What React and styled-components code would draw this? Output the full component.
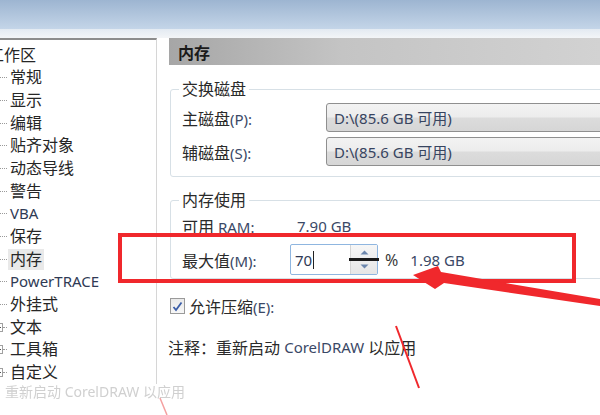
import styled, { createGlobalStyle } from "styled-components";

const Global = createGlobalStyle`
  html, body {
    margin: 0;
    padding: 0;
    background: #fff;
  }
  body {
    font-family: "Noto Sans", "Noto Sans CJK SC", sans-serif;
    color: #2a2a2a;
  }
`;

const Page = styled.div`
  position: relative;
  width: 600px;
  height: 415px;
  overflow: hidden;
  display: flex;
  flex-direction: column;
  background: #fff;
`;

const TopBand = styled.div`
  flex: none;
  height: 29px;
  background: linear-gradient(#9db5d1, #c4d5e8);
`;

const Strip = styled.div`
  flex: none;
  height: 9px;
  background: linear-gradient(#e3eaf2, #f3f5f7);
`;

const Main = styled.div`
  display: flex;
  flex: 1;
  min-height: 0;
`;

const Side = styled.div`
  flex: none;
  width: 157px;
  display: flex;
  flex-direction: column;
`;

const Tree = styled.ul`
  list-style: none;
  margin: 0;
  padding: 4px 0 0;
  border-top: 2px solid #8c8c8c;
  border-right: 1px solid #d6d6d6;
  overflow: hidden;
`;

const TreeRow = styled.li`
  display: flex;
  align-items: center;
  height: 22.65px;
  font-size: 16px;
  white-space: nowrap;
`;

const Dash = styled.span`
  flex: none;
  width: ${(p) => (p.short ? "4px" : "7px")};
  border-top: 1px dotted #9a9a9a;
  margin-right: 1px;
`;

const Expander = styled.span`
  flex: none;
  position: relative;
  width: 9px;
  height: 9px;
  margin-left: -6px;
  border: 1px solid #a0a0a0;
  box-sizing: border-box;
  &::before {
    content: "";
    position: absolute;
    left: 1px;
    right: 1px;
    top: 3px;
    border-top: 1px solid #555;
  }
  &::after {
    content: "";
    position: absolute;
    top: 1px;
    bottom: 1px;
    left: 3px;
    border-left: 1px solid #555;
  }
`;

const TreeText = styled.span`
  padding: 0 2px;
  line-height: 21px;
  margin-left: ${(p) => (p.root ? "-14px" : "0")};
  color: ${(p) => (p.latin ? "#2f3a55" : "#262626")};
  background: ${(p) => (p.selected ? "#e9e9e9" : "transparent")};
  font-size: ${(p) => (p.latin ? "15px" : "16px")};
`;

const Ghost = styled.div`
  padding-left: 5px;
  font-size: 14px;
  line-height: 16px;
  color: #d0d0d0;
  white-space: nowrap;
  filter: blur(0.6px);
`;

const Content = styled.div`
  flex: 1;
  min-width: 0;
  padding-left: 12px;
  display: flex;
  flex-direction: column;
`;

const Header = styled.div`
  height: 27px;
  display: flex;
  align-items: center;
  padding-left: 9px;
  font-size: 16px;
  font-weight: bold;
  color: #1a1a1a;
  background: linear-gradient(90deg, #a6a6a6, #c4c4c4 40%, #d2d2d2);
`;

const Group = styled.fieldset`
  margin: ${(p) => p.top}px -30px 0 1px;
  padding: ${(p) => p.pad};
  min-width: 0;
  border: 1px solid #d7e0e6;
  border-radius: 3px;
  display: flex;
  flex-direction: column;
  gap: ${(p) => p.gap}px;
`;

const Legend = styled.legend`
  padding: 0 3px;
  margin-left: 8px;
  font-size: 16px;
  line-height: 20px;
  color: #2a2a2a;
`;

const FieldRow = styled.div`
  display: flex;
  align-items: center;
  padding-left: 11px;
  height: ${(p) => p.h}px;
`;

const Label = styled.div`
  flex: none;
  width: ${(p) => p.w}px;
  font-size: 16px;
  white-space: nowrap;
  color: #2a2a2a;
`;

const Latin = styled.span`
  color: #3a4866;
  font-size: 15px;
`;

const Combo = styled.div`
  flex: 1;
  height: 29px;
  box-sizing: border-box;
  display: flex;
  align-items: center;
  padding-left: 7px;
  border: 1px solid #8f8f8f;
  border-radius: 3px;
  background: linear-gradient(#f3f3f3, #ececec 48%, #dcdcdc 52%, #d6d6d6);
  font-size: 15px;
  color: #37445f;
  white-space: nowrap;
`;

const Value = styled.div`
  padding-left: 7px;
  font-size: 15px;
  color: #3a4866;
`;

const Spin = styled.div`
  flex: none;
  width: 88px;
  height: 31px;
  box-sizing: border-box;
  display: flex;
  border: 1px solid #8fb6e0;
  border-radius: 2px;
  background: #fff;
`;

const SpinText = styled.div`
  flex: 1;
  display: flex;
  align-items: center;
  padding-left: 4px;
  font-size: 15px;
  color: #2f3a55;
  &::after {
    content: "";
    width: 1px;
    height: 18px;
    margin-left: 1px;
    background: #222;
  }
`;

const SpinButtons = styled.div`
  position: relative;
  flex: none;
  width: 26px;
  display: flex;
  flex-direction: column;
  border-left: 1px solid #d4d4d4;
  background: linear-gradient(#f6f6f6, #e6e6e6);
  &::after {
    content: "";
    position: absolute;
    left: -2px;
    right: -2px;
    top: calc(50% - 2px);
    height: 3px;
    background: #1a1a1a;
  }
`;

const SpinHalf = styled.div`
  flex: 1;
  display: flex;
  align-items: center;
  justify-content: center;
`;

const Unit = styled.div`
  padding-left: 7px;
  font-size: 16px;
  color: #3a3a3a;
`;

const Amount = styled.div`
  padding-left: 12px;
  font-size: 15px;
  color: #3a4866;
`;

const CheckRow = styled.div`
  display: flex;
  align-items: center;
  gap: 4px;
  margin: 16px 0 0 1px;
  height: 22px;
  font-size: 16px;
`;

const Box = styled.span`
  flex: none;
  width: 15px;
  height: 16px;
  box-sizing: border-box;
  border: 1px solid #9a9a9a;
  background: linear-gradient(#e9e9e9, #f7f7f7);
  display: flex;
  align-items: center;
  justify-content: center;
`;

const Note = styled.div`
  margin: 19px 0 0 -1px;
  height: 22px;
  display: flex;
  align-items: center;
  font-size: 16px;
  white-space: nowrap;
`;

const Marks = styled.svg`
  position: absolute;
  left: 0;
  top: 0;
  pointer-events: none;
`;

const tree = [
  { text: "工作区", root: true },
  { text: "常规" },
  { text: "显示" },
  { text: "编辑" },
  { text: "贴齐对象" },
  { text: "动态导线" },
  { text: "警告" },
  { text: "VBA", latin: true },
  { text: "保存" },
  { text: "内存", selected: true },
  { text: "PowerTRACE", latin: true },
  { text: "外挂式" },
  { text: "文本", expand: true },
  { text: "工具箱", expand: true },
  { text: "自定义", expand: true },
];

const Arrow = ({ dir }) => (
  <svg width="9" height="5" viewBox="0 0 9 5">
    <path
      d={dir === "up" ? "M0.5 4.5 L4.5 0.5 L8.5 4.5 Z" : "M0.5 0.5 L4.5 4.5 L8.5 0.5 Z"}
      fill="#6d87ad"
    />
  </svg>
);

export default function App() {
  return (
    <Page>
      <Global />
      <TopBand />
      <Strip />
      <Main>
        <Side>
          <Tree>
            {tree.map((item) => (
              <TreeRow key={item.text}>
                {item.expand && <Expander />}
                {!item.root && <Dash short={item.expand} />}
                <TreeText root={item.root} latin={item.latin} selected={item.selected}>
                  {item.text}
                </TreeText>
              </TreeRow>
            ))}
          </Tree>
          <Ghost>重新启动 CorelDRAW 以应用</Ghost>
        </Side>
        <Content>
          <Header>内存</Header>
          <Group top={14} pad="4px 0 10px" gap={5}>
            <Legend>交换磁盘</Legend>
            <FieldRow h={29}>
              <Label w={144}>
                主磁盘<Latin>(P):</Latin>
              </Label>
              <Combo>D:\(85.6 GB 可用)</Combo>
            </FieldRow>
            <FieldRow h={29}>
              <Label w={144}>
                辅磁盘<Latin>(S):</Latin>
              </Label>
              <Combo>D:\(85.6 GB 可用)</Combo>
            </FieldRow>
          </Group>
          <Group top={13} pad="5px 0 3px" gap={7}>
            <Legend>内存使用</Legend>
            <FieldRow h={22}>
              <Label w={108}>
                可用<Latin> RAM:</Latin>
              </Label>
              <Value>7.90 GB</Value>
            </FieldRow>
            <FieldRow h={31}>
              <Label w={108}>
                最大值<Latin>(M):</Latin>
              </Label>
              <Spin>
                <SpinText>70</SpinText>
                <SpinButtons>
                  <SpinHalf>
                    <Arrow dir="up" />
                  </SpinHalf>
                  <SpinHalf>
                    <Arrow dir="down" />
                  </SpinHalf>
                </SpinButtons>
              </Spin>
              <Unit>%</Unit>
              <Amount>1.98 GB</Amount>
            </FieldRow>
          </Group>
          <CheckRow>
            <Box>
              <svg width="11" height="11" viewBox="0 0 11 11">
                <path d="M1.5 6 L4 9 L9.5 1.5" fill="none" stroke="#3b5ea8" strokeWidth="1.8" />
              </svg>
            </Box>
            <span>
              允许压缩<Latin>(E):</Latin>
            </span>
          </CheckRow>
          <Note>
            注释：重新启动&nbsp;<Latin>CorelDRAW</Latin>&nbsp;以应用
          </Note>
        </Content>
      </Main>
      <Marks width="600" height="415" viewBox="0 0 600 415">
        <rect x="120" y="235" width="454" height="46" fill="none" stroke="#f0282c" strokeWidth="4" />
        <path
          d="M413 275 L438 266 L441 272 L600 299 L600 306 L444 283 L435 289 Z"
          fill="#f0282c"
        />
        <path d="M396 326 L419 388" stroke="#f0282c" strokeWidth="2" />
        <path d="M160 398 L167 415" stroke="#f4a0a0" strokeWidth="1.5" />
      </Marks>
    </Page>
  );
}
